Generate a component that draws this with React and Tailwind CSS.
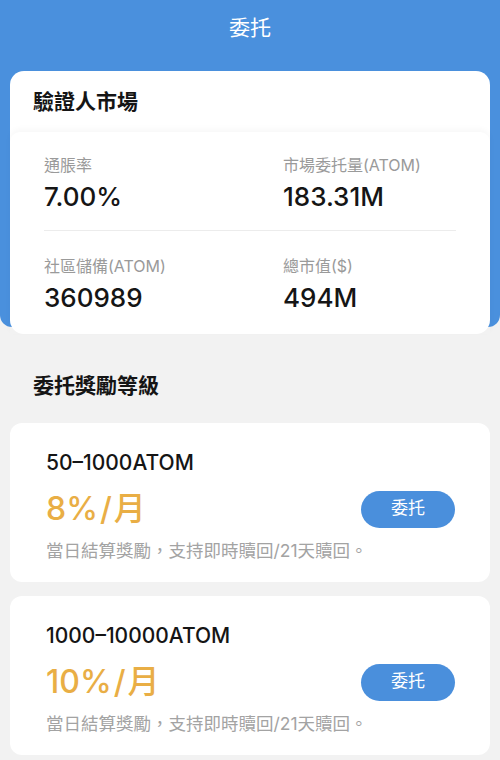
import React from "react";

const font = { fontFamily: 'Inter, "Noto Sans CJK TC", sans-serif' };

function Stat({ label, value }) {
  return (
    <div className="flex flex-col">
      <div className="text-[16px] leading-[20px] text-[#9a9a9a]">{label}</div>
      <div className="mt-[6px] text-[26px] leading-[32px] font-medium text-[#151515]">{value}</div>
    </div>
  );
}

function Tier({ range, pct }) {
  return (
    <div className="rounded-[12px] bg-white pl-[36px] pr-[35px] pt-[26px] pb-[20px]">
      <div className="text-[21px] leading-[28px] font-medium text-[#151515]">{range}</div>
      <div className="mt-[12px] flex items-center justify-between">
        <div className="flex items-center text-[32px] leading-[40px] font-medium text-[#e9ae45]">
          <span>{pct}</span>
          <span className="mx-[2px]">/</span>
          <span>月</span>
        </div>
        <button className="h-[37px] w-[94px] rounded-full bg-[#4a8fdc] text-[17px] text-white">委托</button>
      </div>
      <div className="mt-[11px] text-[17.5px] leading-[22px] text-[#a3a3a3]">當日結算獎勵，支持即時贖回/21天贖回。</div>
    </div>
  );
}

export default function App() {
  return (
    <div className="min-h-[760px] bg-[#f2f2f2]" style={font}>
      <div className="flex flex-col rounded-b-[12px] bg-[#4a90dd] px-[10px]">
        <div className="flex h-[71px] items-center justify-center pb-[15px] text-[21px] text-white">委托</div>
        <div className="relative -mb-[7px] rounded-[14px] bg-white">
          <div className="flex h-[61px] items-center px-[23px] text-[21px] font-bold text-[#151515]">驗證人市場</div>
          <div className="rounded-t-[10px] px-[34px] pt-[23px] pb-[20px] shadow-[0_-3px_6px_rgba(0,0,0,0.03)]">
            <div className="grid grid-cols-[239px_1fr]">
              <Stat label="通脹率" value="7.00%" />
              <Stat label="市場委托量(ATOM)" value="183.31M" />
            </div>
            <div className="mt-[17px] mb-[25px] h-px bg-[#ececec]" />
            <div className="grid grid-cols-[239px_1fr]">
              <Stat label="社區儲備(ATOM)" value="360989" />
              <Stat label="總市值($)" value="494M" />
            </div>
          </div>
        </div>
      </div>
      <div className="px-[33px] pt-[45px] pb-[23px] text-[21px] leading-[28px] font-bold text-[#151515]">委托獎勵等級</div>
      <div className="flex flex-col gap-[14px] px-[10px]">
        <Tier range="50–1000ATOM" pct="8%" />
        <Tier range="1000–10000ATOM" pct="10%" />
      </div>
    </div>
  );
}
